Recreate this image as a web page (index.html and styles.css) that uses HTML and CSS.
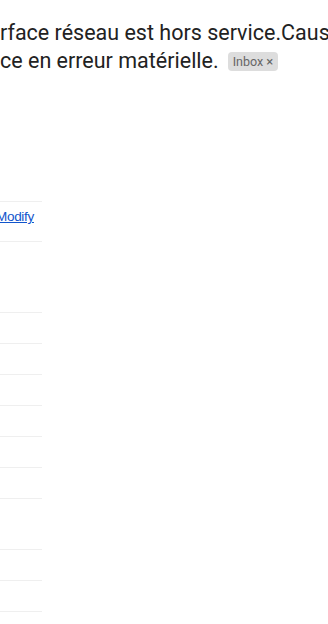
FILE: index.html
```html
<!DOCTYPE html>
<html lang="fr">
<head>
    <meta charset="UTF-8">
    <meta name="viewport" content="width=device-width, initial-scale=1.0">
    <title>Message</title>
    <link rel="stylesheet" href="styles.css">
</head>
<body>

    <!-- Sujet du message -->
    <h1 class="subject">
        <span class="subject-line">rface réseau est hors service.Caus</span>
        <span class="subject-line">ce en erreur matérielle.<span class="chip">Inbox <span class="chip-x">×</span></span></span>
    </h1>

    <!-- Colonne des lignes -->
    <div class="rows">
        <div class="row row-action"><a href="#" class="modify">Modify</a></div>
        <div class="row row-big"></div>
        <div class="row"></div>
        <div class="row"></div>
        <div class="row"></div>
        <div class="row"></div>
        <div class="row"></div>
        <div class="row"></div>
        <div class="row row-mid"></div>
        <div class="row"></div>
        <div class="row"></div>
    </div>

</body>
</html>
```

FILE: styles.css
```css
html, body {
    margin: 0;
    padding: 0;
    background-color: #fff;
    overflow: hidden;
}

body {
    width: 328px;
    height: 624px;
}

.subject {
    margin: 0;
    padding-top: 19px;
    font-family: Roboto, Arial, sans-serif;
    font-size: 21.5px;
    font-weight: normal;
    line-height: 28px;
    color: #222;
}

.subject-line {
    display: block;
    white-space: nowrap;
}

.chip {
    display: inline-block;
    vertical-align: 2px;
    margin-left: 9px;
    padding: 0 5px;
    height: 19px;
    line-height: 19px;
    background-color: #ddd;
    border-radius: 4px;
    font-family: Roboto, Arial, sans-serif;
    font-size: 12.5px;
    color: #666;
}

.chip-x {
    font-size: 13px;
}

.rows {
    width: 42px;
    margin-top: 126px;
    border-top: 1px solid #efefef;
}

.row {
    height: 30px;
    border-bottom: 1px solid #efefef;
}

.row-action {
    height: 40px;
    box-sizing: border-box;
    padding-top: 5px;
    overflow: hidden;
}

.row-big {
    height: 70px;
}

.row-mid {
    height: 50px;
}

.modify {
    display: inline-block;
    margin-left: -4px;
    font-family: Arial, sans-serif;
    font-size: 13.5px;
    letter-spacing: -0.3px;
    color: #15c;
    text-decoration: underline;
}
```
